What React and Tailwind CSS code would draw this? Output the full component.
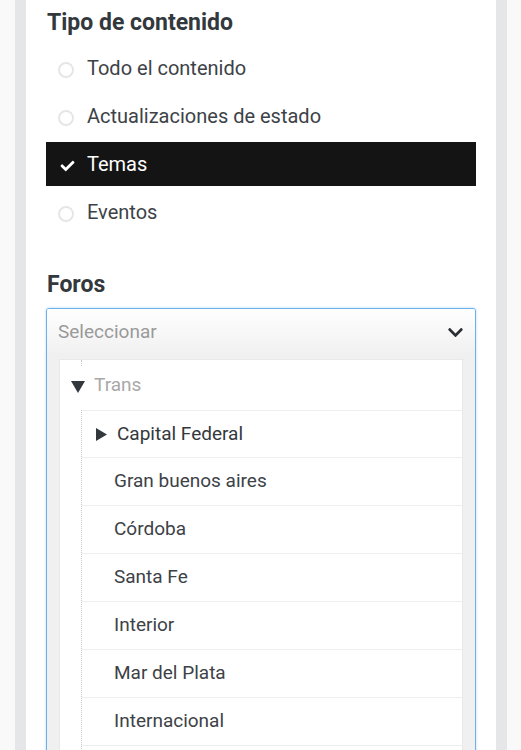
import React from "react";
import { FaCheck, FaChevronDown } from "react-icons/fa";

const font = { fontFamily: "Roboto, 'Liberation Sans', sans-serif" };

function Radio() {
  return <span className="block w-[16px] h-[16px] rounded-full border-2 border-[#e6e6e6] mt-[4px]" />;
}

function TriDown({ className }) {
  return (
    <svg width="14" height="12" viewBox="0 0 14 12" className={className}>
      <polygon points="0,0 14,0 7,12" fill="#33383d" />
    </svg>
  );
}

function TriRight({ className }) {
  return (
    <svg width="11" height="13" viewBox="0 0 11 13" className={className}>
      <polygon points="0,0 11,6.5 0,13" fill="#33383d" />
    </svg>
  );
}

export default function App() {
  const types = [
    { label: "Todo el contenido" },
    { label: "Actualizaciones de estado" },
    { label: "Temas", active: true },
    { label: "Eventos" },
  ];
  const forums = ["Gran buenos aires", "Córdoba", "Santa Fe", "Interior", "Mar del Plata", "Internacional"];
  return (
    <div className="min-h-screen bg-[#f9f9f9] pl-[15px] pr-[14px]" style={font}>
      <div className="min-h-screen border-x-[11px] border-[#e5e6e8] bg-white px-[20px] pb-10">
        <h2 className="pt-[9px] text-[23px] leading-[28px] font-bold text-[#33383d] pl-[1px]">Tipo de contenido</h2>
        <div className="mt-[9px] flex flex-col gap-[4px]">
          {types.map((t) =>
            t.active ? (
              <div key={t.label} className="h-[44px] bg-[#141414] flex items-center pl-[13px] text-white">
                <FaCheck className="w-[17px] h-[14px] mt-[4px]" />
                <span className="ml-[11px] text-[20px]">{t.label}</span>
              </div>
            ) : (
              <div key={t.label} className="h-[44px] flex items-center pl-[12px] text-[#3d4247]">
                <Radio />
                <span className="ml-[13px] text-[20px]">{t.label}</span>
              </div>
            )
          )}
        </div>
        <h2 className="mt-[37px] text-[23px] leading-[28px] font-bold text-[#33383d] pl-[1px]">Foros</h2>
        <div className="mt-[9px] border border-[#6cb0ea] rounded-[3px] shadow-[0_0_3px_rgba(102,175,233,0.45)] bg-[#f0f0f0] overflow-hidden">
          <div className="h-[46px] flex items-center justify-between pl-[11px] pr-[11px] bg-gradient-to-b from-white to-[#f0f0f0]">
            <span className="text-[19px] text-[#9a9a9a]">Seleccionar</span>
            <FaChevronDown className="w-[17px] h-[17px] text-[#2b2f33]" />
          </div>
          <div className="px-[12px] pt-[4px] pb-4">
            <div className="bg-white border border-[#e8e8e8]">
              <div className="relative h-[50px] flex items-center pl-[11px]">
                <span className="absolute left-[21px] top-0 h-[6px] border-l border-dotted border-[#c8c8c8]" />
                <TriDown className="mt-[3px]" />
                <span className="ml-[9px] text-[19px] text-[#a8a8a8]">Trans</span>
              </div>
              <div className="ml-[21px] border-l border-dotted border-[#c8c8c8]">
                <div className="h-[47px] border-t border-[#eeeeee] flex items-center pl-[14px] text-[#33383d]">
                  <TriRight />
                  <span className="ml-[10px] text-[19px]">Capital Federal</span>
                </div>
                {forums.map((f) => (
                  <div key={f} className="h-[48px] border-t border-[#eeeeee] flex items-center pl-[32px] text-[19px] text-[#3d4247]">
                    {f}
                  </div>
                ))}
                <div className="h-[48px] border-t border-[#eeeeee]" />
              </div>
            </div>
          </div>
        </div>
      </div>
    </div>
  );
}
